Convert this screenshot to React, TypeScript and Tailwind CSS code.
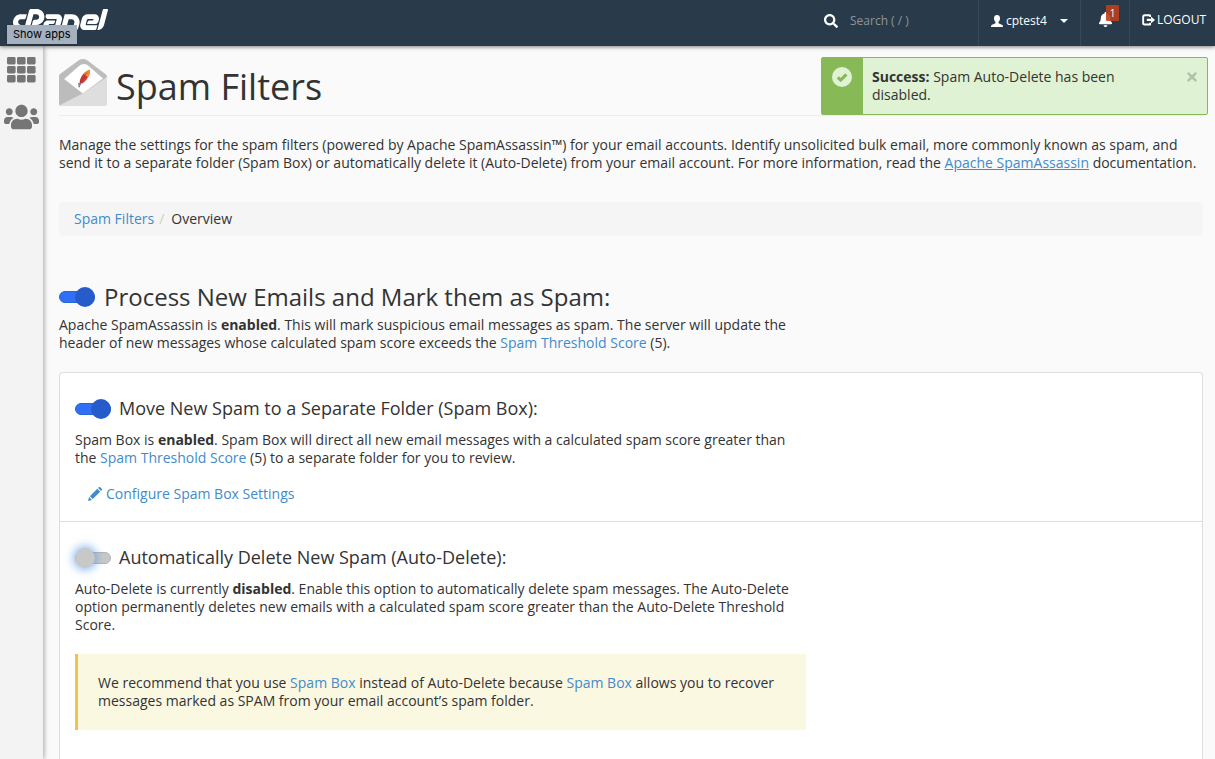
import type { ReactNode } from "react";
import { FaBell, FaCpanel, FaSearch, FaTimes, FaUsers } from "react-icons/fa";

const linkClass = "text-[#428bca] hover:underline";

function AppsIcon() {
  const steps = [0, 10, 20];
  return (
    <svg viewBox="0 0 29 26" className="h-[26px] w-[29px]" fill="#757575" aria-hidden="true">
      {steps.map((x) =>
        [0, 9, 18].map((y) => <rect key={`${x}-${y}`} x={x} y={y} width="8.6" height="7.4" rx="1.4" />)
      )}
    </svg>
  );
}

function UserIcon() {
  return (
    <svg viewBox="0 0 12 12" className="size-3" fill="currentColor" aria-hidden="true">
      <path d="M6 0C4.200 0 3 1.200 3 3.200c0 1.600.6 2.900 1.500 3.700v.9c0 .4-.2.6-.6.800C2.600 9.200.9 9.800.3 10.400c-.3.300-.3 1-.3 1.600h12c0-.6 0-1.300-.3-1.600-.6-.6-2.300-1.200-3.600-1.800-.4-.2-.6-.4-.6-.8v-.9C8.400 6.100 9 4.800 9 3.200 9 1.200 7.800 0 6 0Z" />
    </svg>
  );
}

function LogoutIcon() {
  return (
    <svg viewBox="0 0 13 12" className="h-3 w-[13px]" fill="currentColor" aria-hidden="true">
      <path d="M7.500.3H2.700A2.500 2.500 0 0 0 .2 2.800v6.200a2.500 2.500 0 0 0 2.500 2.500h4.800c.7 0 1.200-.2 1.500-.6V8.800H7.200v.8H3c-.5 0-.9-.4-.9-.9V3.100c0-.5.4-.9.900-.9h4.200v.8H9V.9C8.700.5 8.200.3 7.500.3Z" />
      <path d="M9 2.500 13 5.900 9 9.300V7.100H4.800V4.700H9Z" />
    </svg>
  );
}

function PencilIcon() {
  return (
    <svg viewBox="0 0 14 14" className="size-[14px]" fill="currentColor" aria-hidden="true">
      <path d="M0 14 1.100 10.100 3.900 12.900ZM1.900 9.200 9.300 1.800 12.200 4.700 4.800 12.100ZM10.100 1 10.800.3c.4-.4 1-.4 1.400 0l1.500 1.500c.4.4.4 1 0 1.400L13 3.900Z" />
    </svg>
  );
}

function CheckIcon() {
  return (
    <svg viewBox="0 0 20 20" className="size-5" aria-hidden="true">
      <circle cx="10" cy="10" r="10" fill="#dff2d4" />
      <path d="m5.800 10.300 2.900 2.800 5.700-5.700" fill="none" stroke="#87b957" strokeWidth="3.200" />
    </svg>
  );
}

function EnvelopeIcon() {
  return (
    <svg viewBox="0 0 48 48" className="size-12" aria-hidden="true">
      <path d="M0 17Q0 16 1 15L19.500 1.500Q24-1.300 28.500 1.500L47 15.500Q48 16.300 48 18L40 30 23 47H2q-2 0-2-2Z" fill="#bcbcbc" />
      <path d="M5.200 20 20 7Q24.500 3.500 29 6.500L44 19.500 23.700 34.500Z" fill="#fff" />
      <path d="M48 18V45q0 2-2 2H2Q.9 47 .5 46.300L23.700 34.500Z" fill="#dedede" />
      <path d="M21 25c-1-4 1.500-9 5.500-12 1.500-1.200 3-2 4.500-2.300.5 2.300-1 6.300-3.500 9.800-2 2.800-4 4.300-6.500 4.500Z" fill="#cb3a35" />
      <path d="M24.500 14.700c2-2 4.500-3.700 6.500-4 .4 2.300-.5 5-2 7.500Z" fill="#f58b2e" />
      <path d="M19.500 27.500C20.500 23.500 24 18 28 13.500" fill="none" stroke="#96304f" strokeWidth=".7" />
      <path d="M19.300 24 20.500 26.500M20 28.500 21.500 25" stroke="#6b78bd" strokeWidth="1" />
    </svg>
  );
}

function Toggle({ id, on, glow }: { id: string; on: boolean; glow?: boolean }) {
  return (
    <span className="relative flex h-5 w-9 shrink-0 items-center">
      <input
        id={id}
        type="checkbox"
        role="switch"
        defaultChecked={on}
        className="peer h-3 w-9 cursor-pointer appearance-none rounded-full border border-[#b3b3b3] bg-[#c8c8c8] outline-none checked:border-[#2a62d8] checked:bg-[#3070f4]"
      />
      <span
        className={`pointer-events-none absolute left-0 size-5 rounded-full bg-[#c8c8c8] peer-checked:left-4 peer-checked:bg-[#265bcb] ${
          glow ? "shadow-[0_0_8px_2px_rgba(82,150,236,0.65)]" : ""
        }`}
      />
    </span>
  );
}

function Option({ id, title, on, glow, children }: { id: string; title: string; on: boolean; glow?: boolean; children: ReactNode }) {
  return (
    <section className="px-[15px] pt-[23px]">
      <h3 className="flex items-center gap-2 text-[18px] leading-6">
        <Toggle id={id} on={on} glow={glow} />
        <label htmlFor={id} className="pb-px">{title}</label>
      </h3>
      <div className="mt-[10px] max-w-[731px]">{children}</div>
    </section>
  );
}

export default function App() {
  return (
    <div className="flex h-screen flex-col overflow-hidden bg-[#fafafa] font-['Open_Sans','Noto_Sans',sans-serif] text-sm leading-[18px] text-[#333]">
      <header className="relative z-20 flex h-[46px] shrink-0 items-stretch bg-[#293a4a] text-white shadow-[0_1px_4px_rgba(0,0,0,0.5)]">
        <a href="#home" aria-label="cPanel" className="mt-[9px] ml-[13px]">
          <FaCpanel viewBox="0 179 640 154" className="h-[23px] w-[95px]" />
        </a>
        <span role="tooltip" className="absolute top-[25px] left-[7px] bg-[#a5b1be] px-[6px] py-px font-[Inter,sans-serif] text-[11px] leading-[17px] text-black shadow-sm">
          Show apps
        </span>
        <div className="ml-auto flex pb-[5px]">
          <label htmlFor="search" className="flex items-center">
            <FaSearch className="size-[14px]" aria-label="Search" />
          </label>
          <input
            id="search"
            type="search"
            placeholder="Search ( / )"
            className="ml-3 w-32 bg-transparent text-xs outline-none placeholder:text-[#8d959d]"
          />
        </div>
        <button type="button" className="flex w-[102px] items-center border-l border-[#36495b] pb-[5px] pl-3 text-xs">
          <UserIcon />
          <span className="ml-[3px]">cptest4</span>
          <span className="ml-[13px] border-x-4 border-t-4 border-x-transparent border-t-white" />
        </button>
        <button type="button" aria-label="Notifications" className="relative flex w-[49px] items-center justify-center border-l border-[#36495b] pb-2">
          <FaBell className="size-[15px]" />
          <span className="absolute top-[5px] left-[25px] h-4 w-[13px] rounded-[1px] bg-[#bd3f1d]/90 text-center text-[10px] leading-4">1</span>
        </button>
        <a href="#logout" className="flex w-[86px] items-center gap-[2px] border-l border-[#36495b] pb-[6px] pl-3 text-xs">
          <LogoutIcon />
          LOGOUT
        </a>
      </header>

      <div className="flex min-h-0 flex-1">
        <nav className="z-10 flex w-[43px] shrink-0 flex-col items-center bg-[#f3f3f3] pt-[11px] shadow-[1px_0_5px_rgba(0,0,0,0.35)]">
          <a href="#apps" aria-label="Show apps">
            <AppsIcon />
          </a>
          <a href="#users" aria-label="User manager" className="mt-[17px] text-[#757575]">
            <FaUsers className="h-[34px] w-[35px]" />
          </a>
        </nav>

        <main className="relative flex min-w-0 flex-1 flex-col pr-3 pl-4">
          <div className="flex h-[70px] shrink-0 items-center gap-[9px] border-b border-[#ededed] pt-[4px]">
            <EnvelopeIcon />
            <h1 className="pt-2 text-4xl leading-10">Spam Filters</h1>
          </div>

          <div role="alert" className="absolute top-[11px] right-[7px] flex w-[387px] rounded-[2px] border border-[#87b957] bg-[#dff2d4]">
            <div className="w-[41px] bg-[#87b957] pt-[9px] pl-[10px]">
              <CheckIcon />
            </div>
            <p className="flex-1 py-[10px] pr-9 pl-[9px]">
              <strong>Success:</strong> Spam Auto-Delete has been disabled.
            </p>
            <button type="button" aria-label="Close" className="absolute top-[12px] right-[8px] text-[#b2c2a9]">
              <FaTimes className="size-[14px]" />
            </button>
          </div>

          <p className="mt-5">
            Manage the settings for the spam filters (powered by Apache SpamAssassin™) for your email accounts. Identify
            unsolicited bulk email, more commonly known as spam, and send it to a separate folder (Spam Box) or
            automatically delete it (Auto-Delete) from your email account. For more information, read the{" "}
            <a href="#docs" className="text-[#428bca] underline">Apache SpamAssassin</a> documentation.
          </p>

          <ol className="mt-[30px] flex rounded-sm bg-[#f5f5f5] px-[15px] py-2">
            <li>
              <a href="#filters" className={linkClass}>Spam Filters</a>
            </li>
            <li className="px-[5px] text-[#ccc]" aria-hidden="true">/</li>
            <li className="pl-[2px]">Overview</li>
          </ol>

          <h2 className="mt-[47px] flex items-center gap-[9px] text-2xl leading-7">
            <Toggle id="process" on />
            <label htmlFor="process">Process New Emails and Mark them as Spam:</label>
          </h2>
          <p className="mt-[5px] max-w-[731px]">
            Apache SpamAssassin is <strong>enabled</strong>. This will mark suspicious email messages as spam. The server
            will update the header of new messages whose calculated spam score exceeds the{" "}
            <a href="#threshold" className={linkClass}>Spam Threshold Score</a> (5).
          </p>

          <div className="mt-5 flex-1 rounded-t border border-b-0 border-[#ddd] bg-white">
            <Option id="spam-box" title="Move New Spam to a Separate Folder (Spam Box):" on>
              <p>
                Spam Box is <strong>enabled</strong>. Spam Box will direct all new email messages with a calculated spam
                score greater than the <a href="#threshold" className={linkClass}>Spam Threshold Score</a> (5) to a
                separate folder for you to review.
              </p>
              <a href="#configure" className={`mt-[18px] mb-[18px] ml-[13px] flex items-center gap-1 ${linkClass}`}>
                <PencilIcon />
                Configure Spam Box Settings
              </a>
            </Option>
            <hr className="border-[#ddd]" />
            <Option id="auto-delete" title="Automatically Delete New Spam (Auto-Delete):" on={false} glow>
              <p>
                Auto-Delete is currently <strong>disabled</strong>. Enable this option to automatically delete spam
                messages. The Auto-Delete option permanently deletes new emails with a calculated spam score greater than
                the Auto-Delete Threshold Score.
              </p>
              <div className="mt-5 border-l-[3px] border-[#f0c34e] bg-[#fbf8e2] p-5">
                We recommend that you use <a href="#spam-box" className={linkClass}>Spam Box</a> instead of Auto-Delete
                because <a href="#spam-box" className={linkClass}>Spam Box</a> allows you to recover messages marked as
                SPAM from your email account’s spam folder.
              </div>
            </Option>
          </div>
        </main>
      </div>
    </div>
  );
}
